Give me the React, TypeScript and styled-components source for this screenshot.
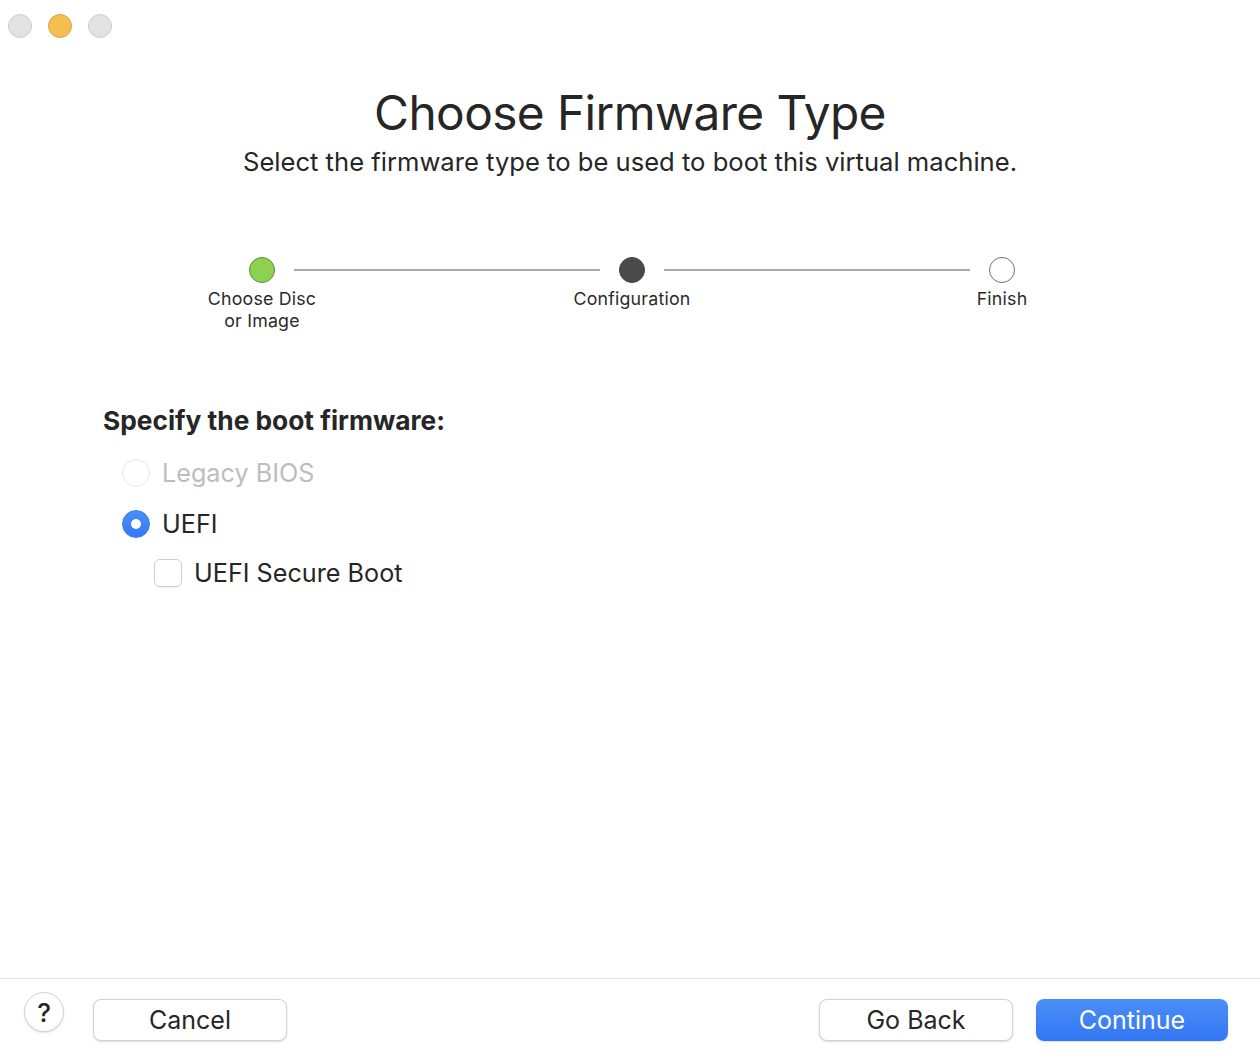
import React from "react";
import styled, { createGlobalStyle } from "styled-components";

const Global = createGlobalStyle`
  html, body { margin: 0; padding: 0; background: #ffffff; }
  body { font-family: Inter, "Noto Sans", "Liberation Sans", sans-serif; color: #262626; }
  * { box-sizing: border-box; }
`;

const Window = styled.div`
  width: 1260px;
  height: 1060px;
  display: flex;
  flex-direction: column;
  background: #ffffff;
  overflow: hidden;
`;

const TitleBar = styled.div`
  display: flex;
  gap: 16px;
  padding: 14px 0 0 8px;
  height: 40px;
`;

const Light = styled.span<{ $color: string; $border: string }>`
  width: 24px;
  height: 24px;
  border-radius: 50%;
  background: ${(p) => p.$color};
  border: 1px solid ${(p) => p.$border};
`;

const Main = styled.main`
  flex: 1;
  display: flex;
  flex-direction: column;
`;

const Title = styled.h1`
  margin: 42px 0 0;
  text-align: center;
  font-size: 47.8px;
  font-weight: 400;
  line-height: 62px;
  letter-spacing: -0.6px;
  color: #262626;
`;

const Subtitle = styled.p`
  margin: 3px 0 0;
  text-align: center;
  font-size: 25.6px;
  line-height: 30px;
  color: #262626;
`;

const Stepper = styled.div`
  width: 860px;
  margin: 80px 0 0 202px;
  display: grid;
  grid-template-columns: 120px 1fr 120px 1fr 120px;
  grid-template-rows: 26px auto;
  row-gap: 5px;
`;

const Dot = styled.span<{ $state: "done" | "current" | "todo" }>`
  justify-self: center;
  width: 26px;
  height: 26px;
  border-radius: 50%;
  background: ${(p) => (p.$state === "done" ? "#8ed14e" : p.$state === "current" ? "#4a4a4a" : "#ffffff")};
  border: 1px solid ${(p) => (p.$state === "done" ? "#5f8c3a" : p.$state === "current" ? "#404040" : "#6f6f6f")};
`;

const Connector = styled.span`
  align-self: center;
  height: 2px;
  background: #a9a9a9;
  margin: 0 -28px;
`;

const StepLabel = styled.span<{ $col: number }>`
  grid-row: 2;
  grid-column: ${(p) => p.$col};
  text-align: center;
  font-size: 17.8px;
  line-height: 22px;
  color: #2b2b2b;
  letter-spacing: 0.2px;
`;

const Form = styled.section`
  margin: 73px 0 0 103px;
  display: flex;
  flex-direction: column;
`;

const Heading = styled.h2`
  margin: 0;
  font-size: 26.3px;
  font-weight: 700;
  line-height: 32px;
  color: #262626;
`;

const Option = styled.label<{ $indent?: number; $disabled?: boolean }>`
  display: flex;
  align-items: center;
  gap: 12px;
  margin-left: ${(p) => p.$indent ?? 19}px;
  height: 28px;
  font-size: 25.2px;
  color: ${(p) => (p.$disabled ? "#bdbdbd" : "#262626")};
`;

const RadioCircle = styled.span<{ $checked?: boolean; $disabled?: boolean }>`
  width: 28px;
  height: 28px;
  border-radius: 50%;
  display: flex;
  align-items: center;
  justify-content: center;
  background: ${(p) => (p.$checked ? "linear-gradient(#4b8ff7, #3478f6)" : "#ffffff")};
  border: 1px solid ${(p) => (p.$checked ? "#3a7ef0" : p.$disabled ? "#e6e6e6" : "#c8c8c8")};
  box-shadow: ${(p) => (p.$disabled || p.$checked ? "none" : "0 1px 1px rgba(0,0,0,0.08)")};
  &::after {
    content: "";
    display: ${(p) => (p.$checked ? "block" : "none")};
    width: 10px;
    height: 10px;
    border-radius: 50%;
    background: #ffffff;
  }
`;

const CheckBox = styled.span`
  width: 28px;
  height: 28px;
  border-radius: 6px;
  background: #ffffff;
  border: 1px solid #cfcfcf;
  box-shadow: 0 1px 1px rgba(0, 0, 0, 0.06);
`;

const OptionsList = styled.div`
  display: flex;
  flex-direction: column;
  margin-top: 22px;
  gap: 23px;
`;

const SubOption = styled.div`
  margin-top: -2px;
`;

const Footer = styled.footer`
  height: 82px;
  border-top: 1px solid #e4e4e4;
  display: flex;
  align-items: flex-start;
  padding: 20px 32px 0 24px;
`;

const HelpButton = styled.button`
  width: 40px;
  height: 40px;
  margin-top: -7px;
  border-radius: 50%;
  border: 1px solid #d4d4d4;
  background: #ffffff;
  box-shadow: 0 1px 2px rgba(0, 0, 0, 0.12);
  font-family: inherit;
  font-size: 26px;
  font-weight: 500;
  color: #262626;
  display: flex;
  align-items: center;
  justify-content: center;
  padding: 0;
`;

const Button = styled.button<{ $primary?: boolean }>`
  width: 194px;
  height: 42px;
  border-radius: 8px;
  font-family: inherit;
  font-size: 25px;
  padding: 0;
  color: ${(p) => (p.$primary ? "#ffffff" : "#262626")};
  background: ${(p) => (p.$primary ? "linear-gradient(#4a8ff7, #3376f5)" : "#ffffff")};
  border: ${(p) => (p.$primary ? "none" : "1px solid #d2d2d2")};
  box-shadow: ${(p) => (p.$primary ? "0 1px 2px rgba(0,0,0,0.12)" : "0 1px 2px rgba(0,0,0,0.14)")};
`;

const Spacer = styled.div`
  flex: 1;
`;

const CancelButton = styled(Button)`
  margin-left: 29px;
`;

const ContinueButton = styled(Button)`
  margin-left: 23px;
  width: 192px;
`;

export default function App() {
  return (
    <>
      <Global />
      <Window>
        <TitleBar>
          <Light $color="#e3e3e3" $border="#cdcdcd" />
          <Light $color="#f5bf4f" $border="#d8a441" />
          <Light $color="#e3e3e3" $border="#cdcdcd" />
        </TitleBar>
        <Main>
          <Title>Choose Firmware Type</Title>
          <Subtitle>Select the firmware type to be used to boot this virtual machine.</Subtitle>
          <Stepper>
            <Dot $state="done" />
            <Connector />
            <Dot $state="current" />
            <Connector />
            <Dot $state="todo" />
            <StepLabel $col={1}>
              Choose Disc
              <br />
              or Image
            </StepLabel>
            <StepLabel $col={3}>Configuration</StepLabel>
            <StepLabel $col={5}>Finish</StepLabel>
          </Stepper>
          <Form>
            <Heading>Specify the boot firmware:</Heading>
            <OptionsList>
              <Option $disabled>
                <RadioCircle $disabled />
                Legacy BIOS
              </Option>
              <Option>
                <RadioCircle $checked />
                UEFI
              </Option>
              <SubOption>
                <Option $indent={51}>
                  <CheckBox />
                  UEFI Secure Boot
                </Option>
              </SubOption>
            </OptionsList>
          </Form>
        </Main>
        <Footer>
          <HelpButton>?</HelpButton>
          <CancelButton>Cancel</CancelButton>
          <Spacer />
          <Button>Go Back</Button>
          <ContinueButton $primary>Continue</ContinueButton>
        </Footer>
      </Window>
    </>
  );
}
